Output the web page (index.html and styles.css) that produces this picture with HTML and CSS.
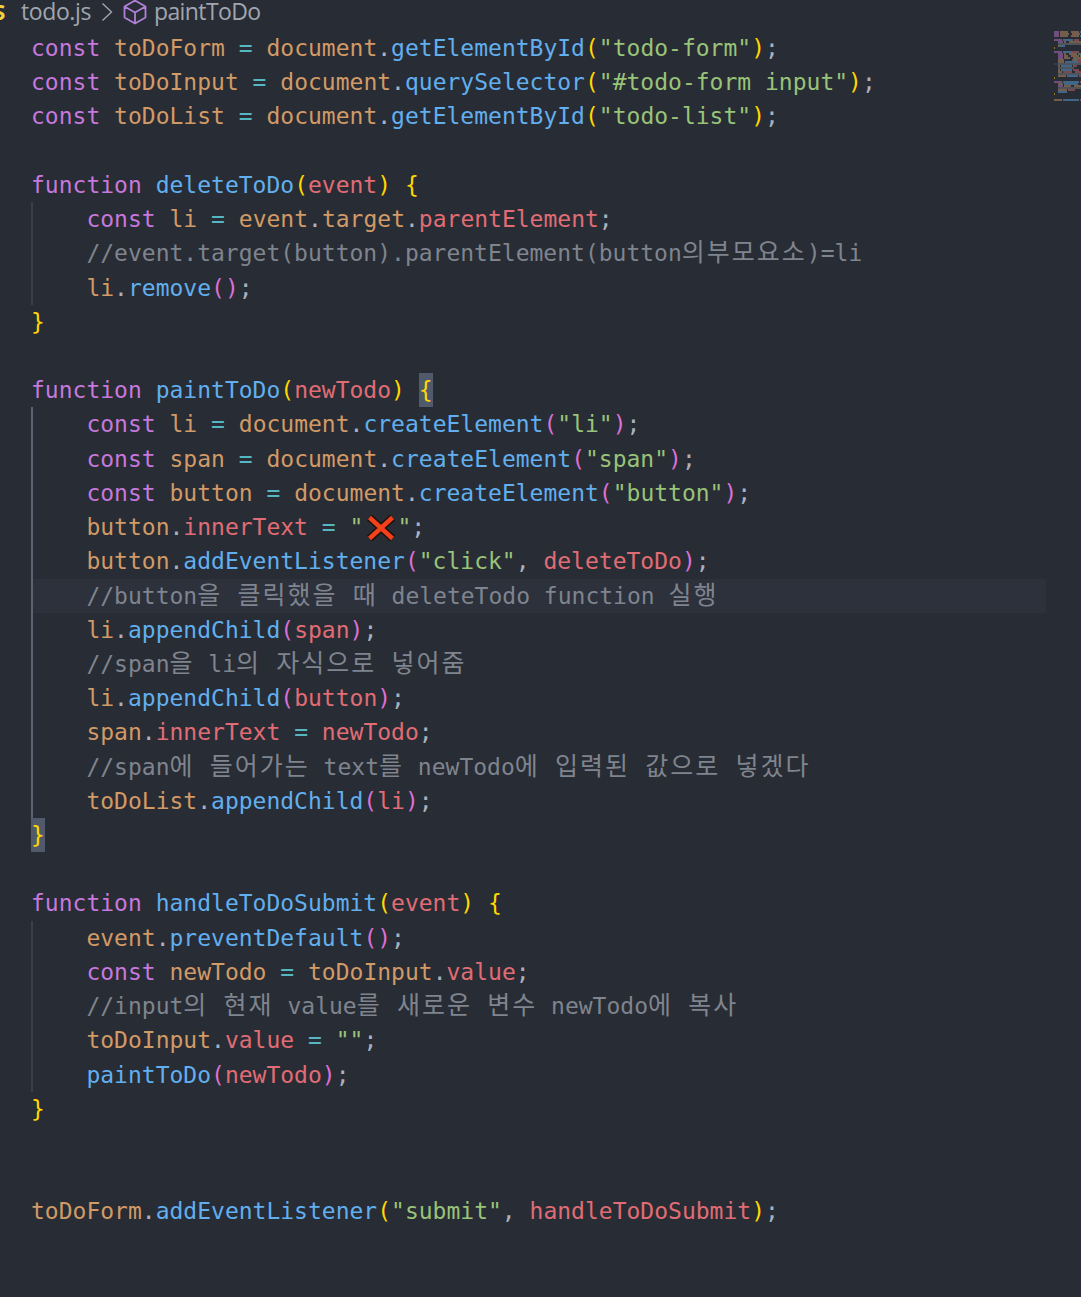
FILE: index.html
```html
<!DOCTYPE html>
<html lang="ko">
<head>
<meta charset="utf-8">
<title>todo.js</title>
<link rel="stylesheet" href="styles.css">
</head>
<body>
<main class="editor">
<nav class="crumbs">
<span class="js-badge">JS</span>
<span class="crumb">todo.js</span>
<svg class="chev" width="12" height="20" viewBox="0 0 12 20"><path d="M1.5 1.5 L10.5 10 L1.5 18.5"/></svg>
<svg class="cube" width="26" height="26" viewBox="0 0 26 26"><path d="M13 1.5 L23.5 7.5 V18.5 L13 24.5 L2.5 18.5 V7.5 Z M2.5 7.5 L13 13.5 L23.5 7.5 M13 13.5 V24.5"/></svg>
<span class="crumb crumb-symbol">paintToDo</span>
</nav>
<section class="code">
<div class="ln"><span class="k">const</span> <span class="v">toDoForm</span> <span class="o">=</span> <span class="v">document</span><span class="p">.</span><span class="f">getElementById</span><span class="b1">(</span><span class="s">"todo-form"</span><span class="b1">)</span><span class="p">;</span></div>
<div class="ln"><span class="k">const</span> <span class="v">toDoInput</span> <span class="o">=</span> <span class="v">document</span><span class="p">.</span><span class="f">querySelector</span><span class="b1">(</span><span class="s">"#todo-form input"</span><span class="b1">)</span><span class="p">;</span></div>
<div class="ln"><span class="k">const</span> <span class="v">toDoList</span> <span class="o">=</span> <span class="v">document</span><span class="p">.</span><span class="f">getElementById</span><span class="b1">(</span><span class="s">"todo-list"</span><span class="b1">)</span><span class="p">;</span></div>
<div class="ln"></div>
<div class="ln"><span class="k">function</span> <span class="f">deleteToDo</span><span class="b1">(</span><span class="r">event</span><span class="b1">)</span> <span class="b1">{</span></div>
<div class="block">
<div class="ln"><span class="k">const</span> <span class="v">li</span> <span class="o">=</span> <span class="v">event</span><span class="p">.</span><span class="v">target</span><span class="p">.</span><span class="r">parentElement</span><span class="p">;</span></div>
<div class="ln c">//event.target(button).parentElement(button<span class="ko">의부모요소</span>)=li</div>
<div class="ln"><span class="v">li</span><span class="p">.</span><span class="f">remove</span><span class="b2">()</span><span class="p">;</span></div>
</div>
<div class="ln"><span class="b1">}</span></div>
<div class="ln"></div>
<div class="ln"><span class="k">function</span> <span class="f">paintToDo</span><span class="b1">(</span><span class="r">newTodo</span><span class="b1">)</span> <span class="b1 match">{</span></div>
<div class="block active">
<div class="ln"><span class="k">const</span> <span class="v">li</span> <span class="o">=</span> <span class="v">document</span><span class="p">.</span><span class="f">createElement</span><span class="b2">(</span><span class="s">"li"</span><span class="b2">)</span><span class="p">;</span></div>
<div class="ln"><span class="k">const</span> <span class="v">span</span> <span class="o">=</span> <span class="v">document</span><span class="p">.</span><span class="f">createElement</span><span class="b2">(</span><span class="s">"span"</span><span class="b2">)</span><span class="p">;</span></div>
<div class="ln"><span class="k">const</span> <span class="v">button</span> <span class="o">=</span> <span class="v">document</span><span class="p">.</span><span class="f">createElement</span><span class="b2">(</span><span class="s">"button"</span><span class="b2">)</span><span class="p">;</span></div>
<div class="ln"><span class="v">button</span><span class="p">.</span><span class="r">innerText</span> <span class="o">=</span> <span class="s">"</span><svg class="cross" width="34" height="28" viewBox="0 0 34 28" role="img" aria-label="cross mark"><path class="cross-edge" d="M6.5 3.5 L29.5 24.5 M29.5 3.5 L6.5 24.5"/><path class="cross-fill" d="M6.5 3.5 L29.5 24.5 M29.5 3.5 L6.5 24.5"/></svg><span class="s">"</span><span class="p">;</span></div>
<div class="ln"><span class="v">button</span><span class="p">.</span><span class="f">addEventListener</span><span class="b2">(</span><span class="s">"click"</span><span class="p">,</span> <span class="r">deleteToDo</span><span class="b2">)</span><span class="p">;</span></div>
<div class="ln c current">//button<span class="ko">을 클릭했을 때</span> deleteTodo function <span class="ko">실행</span></div>
<div class="ln"><span class="v">li</span><span class="p">.</span><span class="f">appendChild</span><span class="b2">(</span><span class="r">span</span><span class="b2">)</span><span class="p">;</span></div>
<div class="ln c">//span<span class="ko">을</span> li<span class="ko">의 자식으로 넣어줌</span></div>
<div class="ln"><span class="v">li</span><span class="p">.</span><span class="f">appendChild</span><span class="b2">(</span><span class="r">button</span><span class="b2">)</span><span class="p">;</span></div>
<div class="ln"><span class="v">span</span><span class="p">.</span><span class="r">innerText</span> <span class="o">=</span> <span class="r">newTodo</span><span class="p">;</span></div>
<div class="ln c">//span<span class="ko">에 들어가는</span> text<span class="ko">를</span> newTodo<span class="ko">에 입력된 값으로 넣겠다</span></div>
<div class="ln"><span class="v">toDoList</span><span class="p">.</span><span class="f">appendChild</span><span class="b2">(</span><span class="r">li</span><span class="b2">)</span><span class="p">;</span></div>
</div>
<div class="ln"><span class="b1 match">}</span></div>
<div class="ln"></div>
<div class="ln"><span class="k">function</span> <span class="f">handleToDoSubmit</span><span class="b1">(</span><span class="r">event</span><span class="b1">)</span> <span class="b1">{</span></div>
<div class="block">
<div class="ln"><span class="v">event</span><span class="p">.</span><span class="f">preventDefault</span><span class="b2">()</span><span class="p">;</span></div>
<div class="ln"><span class="k">const</span> <span class="v">newTodo</span> <span class="o">=</span> <span class="v">toDoInput</span><span class="p">.</span><span class="r">value</span><span class="p">;</span></div>
<div class="ln c">//input<span class="ko">의 현재</span> value<span class="ko">를 새로운 변수</span> newTodo<span class="ko">에 복사</span></div>
<div class="ln"><span class="v">toDoInput</span><span class="p">.</span><span class="r">value</span> <span class="o">=</span> <span class="s">""</span><span class="p">;</span></div>
<div class="ln"><span class="f">paintToDo</span><span class="b2">(</span><span class="r">newTodo</span><span class="b2">)</span><span class="p">;</span></div>
</div>
<div class="ln"><span class="b1">}</span></div>
<div class="ln"></div>
<div class="ln"></div>
<div class="ln"><span class="v">toDoForm</span><span class="p">.</span><span class="f">addEventListener</span><span class="b1">(</span><span class="s">"submit"</span><span class="p">,</span> <span class="r">handleToDoSubmit</span><span class="b1">)</span><span class="p">;</span></div>
</section>
<svg class="minimap" width="27" height="70" viewBox="0 0 27 70" aria-hidden="true">
<rect class="mm-cur" x="0" y="32" width="27" height="2"/>
<path class="mm-k" d="M0 1h5M0 3h5M0 5h5M0 9h8M4 11h5M0 21h8M4 23h5M4 25h5M4 27h5M0 51h8M4 55h5"/>
<path class="mm-v" d="M6 1h8M17 1h8M6 3h9M18 3h8M6 5h8M17 5h8M10 11h2M15 11h12M4 15h2M10 23h2M15 23h8M10 25h4M17 25h8M10 27h6M19 27h8M4 29h6M4 31h6M4 35h2M4 39h2M4 41h4M4 45h8M4 53h5M10 55h7M20 55h9M4 59h9M0 69h8"/>
<path class="mm-f" d="M26 1h1M27 3h1M26 5h1M9 9h10M5 15h6M9 21h9M24 23h3M26 25h1M11 31h16M7 35h11M7 39h11M13 45h11M10 53h14M4 61h9M9 51h16M9 69h16"/>
<path class="mm-r" d="M20 9h5M18 21h7M18 29h9M24 31h3M19 35h4M19 39h6M9 41h9M21 41h7M25 45h2M14 59h7M26 51h1M26 69h1"/>
<path class="mm-s" d="M25 23h2M26 25h1M20 29h3"/>
<path class="mm-c" d="M4 13h23M4 33h23M4 37h16M4 43h23M4 57h23"/>
<path class="mm-y" d="M0 17h1M0 47h1M0 63h1"/>
</svg>
</main>
</body>
</html>
```
FILE: styles.css
```css
* {
  box-sizing: border-box;
}

html,
body {
  margin: 0;
  padding: 0;
  background: #282c34;
}

.editor {
  position: relative;
  width: 1081px;
  height: 1297px;
  overflow: hidden;
  background: #282c34;
}

.crumbs {
  display: flex;
  align-items: center;
  height: 31px;
  padding-bottom: 8px;
  margin-left: -13px;
  font-family: "Open Sans", "Noto Sans", sans-serif;
  font-size: 23px;
  line-height: 23px;
  color: #a0a6b1;
}

.js-badge {
  width: 21px;
  font-weight: 700;
  font-size: 22px;
  letter-spacing: -1px;
  color: #f2d13d;
}

.crumb {
  margin-left: 13px;
  letter-spacing: -0.4px;
}

.crumb-symbol {
  margin-left: 6px;
  letter-spacing: -0.6px;
}

.chev {
  margin-left: 10px;
  fill: none;
  stroke: #a0a6b1;
  stroke-width: 1.4;
}

.cube {
  margin-left: 9px;
  margin-right: 0;
  fill: none;
  stroke: #b180d7;
  stroke-width: 1.8;
  stroke-linejoin: round;
}

.code {
  width: 1046px;
  padding-left: 31px;
  font-family: "DejaVu Sans Mono", "Noto Sans CJK KR", monospace;
  font-size: 23px;
  color: #abb2bf;
}

.ln {
  height: 34.22px;
  line-height: 34.22px;
  white-space: pre;
}

.block {
  padding-left: 53.4px;
  border-left: 2px solid #3b4048;
}

.block.active {
  border-left-color: #5c6370;
}

.current {
  margin-left: -53.4px;
  padding-left: 53.4px;
  background: #2c313c;
}

.k {
  color: #c678dd;
}

.v {
  color: #d19a66;
}

.o {
  color: #56b6c2;
}

.f {
  color: #61afef;
}

.s {
  color: #98c379;
}

.r {
  color: #e06c75;
}

.p {
  color: #abb2bf;
}

.c {
  color: #7f848e;
}

.b1 {
  color: #ffd700;
}

.b2 {
  color: #da70d6;
}

.match {
  display: inline-block;
  height: 34.22px;
  background: #515a6b;
}

.ko {
  font-family: "Noto Sans CJK KR", sans-serif;
  font-size: 25px;
  line-height: 0;
  letter-spacing: 2px;
  word-spacing: 6.25px;
}

.cross {
  vertical-align: -7px;
}

.cross-edge {
  fill: none;
  stroke: #1a1208;
  stroke-width: 7.5;
}

.cross-fill {
  fill: none;
  stroke: #f4401c;
  stroke-width: 4.5;
}

.minimap {
  position: absolute;
  left: 1054px;
  top: 31px;
  fill: none;
  stroke-width: 2;
  opacity: 0.45;
}

.mm-cur {
  fill: #2f5a85;
  stroke: none;
}

.mm-k {
  stroke: #c678dd;
}

.mm-v {
  stroke: #d19a66;
}

.mm-f {
  stroke: #61afef;
}

.mm-r {
  stroke: #e06c75;
}

.mm-s {
  stroke: #98c379;
}

.mm-c {
  stroke: #7f848e;
}

.mm-y {
  stroke: #ffd700;
}
```
